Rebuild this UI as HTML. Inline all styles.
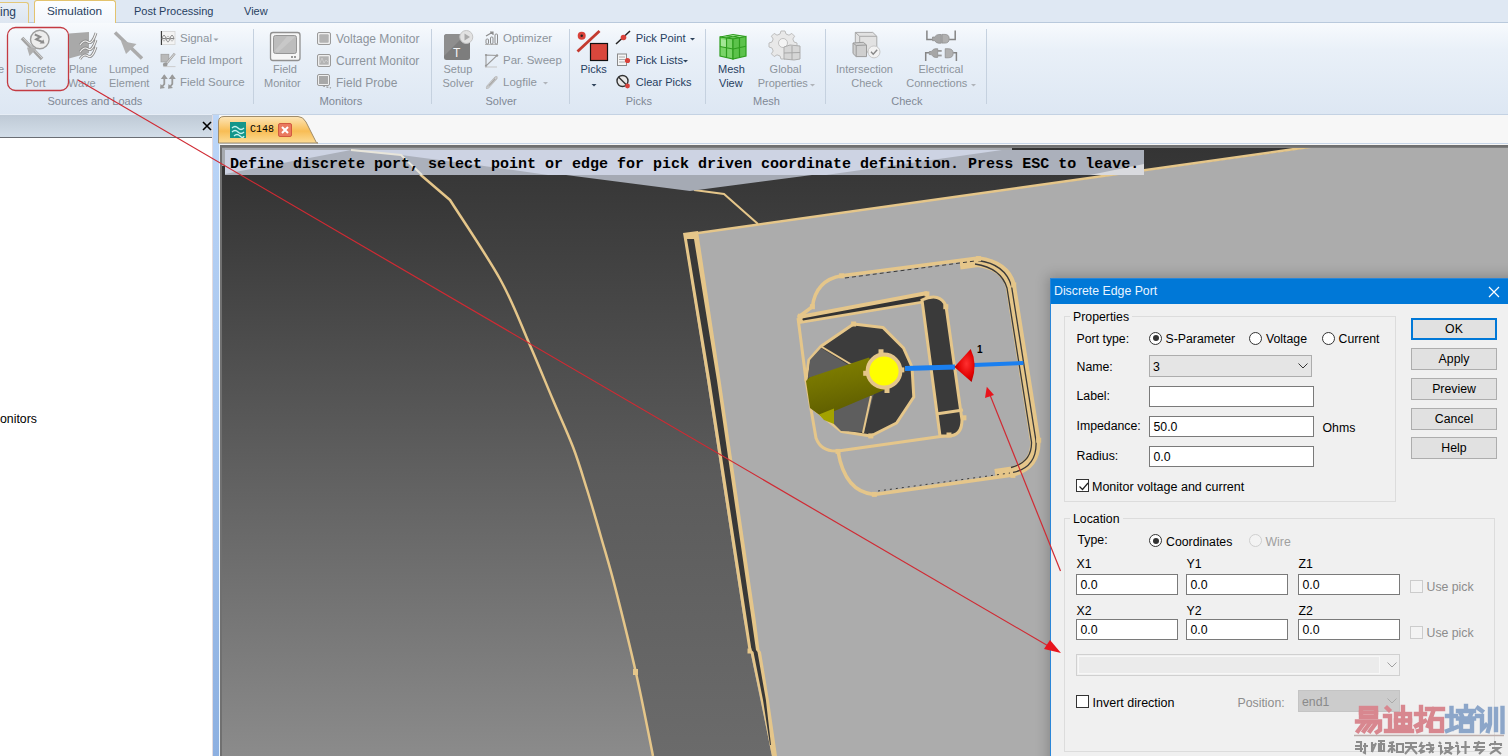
<!DOCTYPE html>
<html><head><meta charset="utf-8">
<style>
*{box-sizing:border-box;margin:0;padding:0}
html,body{width:1508px;height:756px;overflow:hidden;background:#f5f5f5;font-family:"Liberation Sans",sans-serif;font-size:12px;color:#000}
.a{position:absolute}
.t{position:absolute;white-space:pre;line-height:1}
#tabrow{left:0;top:0;width:1508px;height:23px;background:#dfe8f3}
#ribbon{left:0;top:22px;width:1508px;height:93px;background:linear-gradient(#f7fafd 0%,#e9f0f8 30%,#dde7f3 100%);border-top:1px solid #b9c9dc;border-bottom:1px solid #c4d2e3}
.rl{color:#8d949c;font-size:12px}
.gl{color:#7f8894;font-size:12px}
.sep{position:absolute;top:29px;width:1px;height:75px;background:#c5d1df}
#lefthdr{left:0;top:114px;width:212px;height:24px;background:linear-gradient(#e6edf6 0,#e6edf6 1px,#bfcad6 1.5px,#d3dee9 100%);border-bottom:1.6px solid #6a6e74}
#leftpanel{left:0;top:138px;width:213px;height:618px;background:#fff}
#lstripe{left:212px;top:115px;width:8px;height:641px;background:linear-gradient(to right,#e2dbe0 0,#e2dbe0 1px,transparent 1px,transparent 7px,#eaf4fd 7px),linear-gradient(#bcd6f8,#8db0e1)}
#tabstrip{left:220px;top:115px;width:1288px;height:30px;background:#f7f7f7}
#vp{left:220px;top:145px;width:1288px;height:611px;background:#3a3a3a;overflow:hidden;border-top:2px solid #707070;border-left:2px solid #707070}
#dlg{left:1050px;top:278px;width:470px;height:490px;background:#f0f0f0;border:1px solid #2a86d8;box-shadow:0 0 12px 2px rgba(0,0,0,0.22)}
#dtitle{left:0;top:0;width:100%;height:25px;background:#0078d7}
.lbl{font-size:12.3px;color:#000}
.tb{position:absolute;background:#fff;border:1px solid #7a7a7a}
.btn{position:absolute;width:86px;height:22px;background:#e1e1e1;border:1px solid #adadad;text-align:center;font-size:12.3px;line-height:20px}
.rad{position:absolute;width:13px;height:13px;border:1px solid #333;border-radius:50%;background:#fff}
.chk{position:absolute;width:13px;height:13px;border:1px solid #333;background:#fff}
</style></head><body>

<div id="tabrow" class="a"></div>
<div id="ribbon" class="a"></div>
<div id="lefthdr" class="a"></div>
<div id="leftpanel" class="a"></div>
<div id="lstripe" class="a"></div>
<div id="tabstrip" class="a"></div><div class="a" style="left:220px;top:143px;width:1288px;height:1px;background:#c8d6e8"></div>
<!-- TAB ROW -->
<div class="a" style="left:-10px;top:2px;width:39px;height:21px;background:linear-gradient(#e8eef6,#dde6f1);border:1px solid #e3c779;border-bottom:none;border-radius:3px 3px 0 0"></div>
<div class="t" style="left:0;top:6px;font-size:12px;color:#27405f">ing</div>
<div class="a" style="left:34px;top:0;width:82px;height:23px;background:linear-gradient(#fdfeff,#f3f7fc);border:1px solid #e3c36e;border-bottom:none;border-radius:3px 3px 0 0"></div>
<div class="t" style="left:47px;top:6px;font-size:11.8px;color:#27405f">Simulation</div>
<div class="t" style="left:134px;top:6px;font-size:11px;color:#27405f">Post Processing</div>
<div class="t" style="left:244px;top:6px;font-size:11px;color:#27405f">View</div>

<!-- RIBBON CONTENT -->
<div class="t rl" style="left:-2px;top:64px;font-size:11px">e</div>
<div class="t rl" style="left:15.5px;top:64px;font-size:11px">Discrete</div>
<div class="t rl" style="left:25.5px;top:78px;font-size:11px">Port</div>
<div class="t rl" style="left:69px;top:64px;font-size:11px">Plane</div>
<div class="t rl" style="left:68px;top:78px;font-size:11px">Wave</div>
<div class="t rl" style="left:109px;top:64px;font-size:11px">Lumped</div>
<div class="t rl" style="left:109px;top:78px;font-size:11px">Element</div>
<div class="t rl" style="left:180px;top:33px;font-size:11.5px">Signal</div>
<div class="t rl" style="left:180px;top:55px;font-size:11.8px">Field Import</div>
<div class="t rl" style="left:180px;top:77px;font-size:11.5px">Field Source</div>
<div class="t gl" style="left:47.5px;top:96px;font-size:11px">Sources and Loads</div>
<div class="sep" style="left:253px"></div>

<div class="t rl" style="left:273px;top:64px;font-size:11px">Field</div>
<div class="t rl" style="left:264px;top:78px;font-size:11px">Monitor</div>
<div class="t rl" style="left:336px;top:33px;font-size:12px">Voltage Monitor</div>
<div class="t rl" style="left:336px;top:55px;font-size:12px">Current Monitor</div>
<div class="t rl" style="left:336px;top:77px;font-size:12px">Field Probe</div>
<div class="t gl" style="left:319.5px;top:96px;font-size:11.2px">Monitors</div>
<div class="sep" style="left:431px"></div>

<div class="t rl" style="left:443.5px;top:64px;font-size:11px">Setup</div>
<div class="t rl" style="left:442.5px;top:78px;font-size:11px">Solver</div>
<div class="t rl" style="left:503px;top:33px;font-size:11.5px">Optimizer</div>
<div class="t rl" style="left:503px;top:55px;font-size:11.5px">Par. Sweep</div>
<div class="t rl" style="left:503px;top:77px;font-size:11.5px">Logfile</div>
<div class="t gl" style="left:485.5px;top:96px;font-size:11px">Solver</div>
<div class="sep" style="left:569px"></div>

<div class="t" style="left:580.5px;top:64px;font-size:11px;color:#27405f">Picks</div>
<div class="t" style="left:635.8px;top:33px;font-size:11.2px;color:#27405f">Pick Point</div>
<div class="t" style="left:635.8px;top:55px;font-size:11.2px;color:#27405f">Pick Lists</div>
<div class="t" style="left:635.8px;top:77px;font-size:11px;color:#27405f">Clear Picks</div>
<div class="t gl" style="left:625.7px;top:96px;font-size:11px">Picks</div>
<div class="sep" style="left:705px"></div>

<div class="t" style="left:718px;top:64px;font-size:11px;color:#27405f">Mesh</div>
<div class="t" style="left:719px;top:78px;font-size:11px;color:#27405f">View</div>
<div class="t rl" style="left:769.6px;top:64px;font-size:11px">Global</div>
<div class="t rl" style="left:757.7px;top:78px;font-size:11px">Properties</div>
<div class="t gl" style="left:753px;top:96px;font-size:11px">Mesh</div>
<div class="sep" style="left:825px"></div>

<div class="t rl" style="left:836px;top:64px;font-size:11px">Intersection</div>
<div class="t rl" style="left:851.3px;top:78px;font-size:11px">Check</div>
<div class="t rl" style="left:918.5px;top:64px;font-size:11px">Electrical</div>
<div class="t rl" style="left:906.2px;top:78px;font-size:11px">Connections</div>
<div class="t gl" style="left:891.3px;top:96px;font-size:11px">Check</div>
<div class="sep" style="left:986px"></div>

<svg class="a" style="left:0;top:0" width="1000" height="115" viewBox="0 0 1000 115">
<defs>
<linearGradient id="gr1" x1="0" y1="0" x2="1" y2="1"><stop offset="0" stop-color="#d0d0d0"/><stop offset="1" stop-color="#8f8f8f"/></linearGradient>
<linearGradient id="grn" x1="0" y1="0" x2="1" y2="1"><stop offset="0" stop-color="#9be38a"/><stop offset="1" stop-color="#3fb52d"/></linearGradient>
</defs>
<!-- red highlight -->
<rect x="7.5" y="27.5" width="61" height="63" rx="8" fill="none" stroke="#c43a42" stroke-width="1.3"/>
<!-- discrete port icon -->
<line x1="22" y1="38" x2="42" y2="59" stroke="#a3a3a3" stroke-width="3.6"/>
<line x1="22.6" y1="37.6" x2="42.6" y2="58.6" stroke="#d2d2d2" stroke-width="1"/>
<polygon points="27,47.5 29.5,56 37,48" fill="#b0b0b0"/>
<circle cx="39.8" cy="39.5" r="9.3" fill="#ededed" stroke="#9e9e9e" stroke-width="1.4"/>
<path d="M34.8,34.5 L40.2,36.8 L36.2,39.3 L42.5,42" fill="none" stroke="#8c8c8c" stroke-width="2"/>
<polygon points="44.5,43.5 39.5,43.5 43.5,39.5" fill="#8c8c8c"/>
<!-- plane wave -->
<polygon points="69,33.5 89,32 89,53 69,58.5" fill="#a9a9a9"/>
<path d="M80,45 q4,-6 8,-3 t8,-9 M80,52 q4,-6 8,-3 t8,-9 M80,59 q4,-6 8,-3 t8,-9" fill="none" stroke="#8a8a8a" stroke-width="2.8"/><path d="M80,45 q4,-6 8,-3 t8,-9 M80,52 q4,-6 8,-3 t8,-9 M80,59 q4,-6 8,-3 t8,-9" fill="none" stroke="#f4f4f4" stroke-width="1.1"/>
<!-- lumped -->
<line x1="115" y1="32.5" x2="142" y2="58.5" stroke="#ababab" stroke-width="3.5"/>
<polygon points="121,41 126,54 136.5,44" fill="#b0b0b0"/>
<!-- signal icon -->
<rect x="161.8" y="31.4" width="13.2" height="13.2" fill="#f3f3f3" stroke="#d4d4d4" stroke-width="0.8"/>
<line x1="161.4" y1="31" x2="161.4" y2="45" stroke="#333" stroke-width="1.1"/>
<line x1="162" y1="38.6" x2="174" y2="38.6" stroke="#666" stroke-width="0.9"/>
<path d="M162,38.6 q2,-7 4,0 t4,0 t4,0" fill="none" stroke="#8a8a8a" stroke-width="0.9"/>
<path d="M162,38.6 q2,5 4,0 t4,0 t4,0" fill="none" stroke="#b0b0b0" stroke-width="0.8"/>
<path d="M213.5,38.5 l5,0 l-2.5,2.5z" fill="#9aa0a8"/>
<!-- field import -->
<rect x="161" y="54.3" width="7.8" height="7.6" fill="#b9b9b9" stroke="#a0a0a0" stroke-width="0.8"/>
<line x1="165.5" y1="64.5" x2="174.8" y2="53.5" stroke="#a5a5a5" stroke-width="2.4"/>
<line x1="165.5" y1="64.5" x2="174.8" y2="53.5" stroke="#e8e8e8" stroke-width="0.8"/>
<circle cx="165.2" cy="64.8" r="2.3" fill="#9a9a9a"/>
<line x1="163.5" y1="66.6" x2="175.5" y2="66.6" stroke="#c8c8c8" stroke-width="0.9"/>
<!-- field source -->
<path d="M164.3,75.5 V84 L161.5,87.5 M172.3,75.5 V84 L169.5,87.5" fill="none" stroke="#9a9a9a" stroke-width="1.8"/>
<path d="M160.8,79 L164.3,74.2 L167.8,79 Z M168.8,79 L172.3,74.2 L175.8,79 Z M160,88.8 L160.5,84 L165,88 Z M168,88.8 L168.5,84 L173,88 Z" fill="#9a9a9a"/>
<!-- field monitor -->
<rect x="270.5" y="32.5" width="29.5" height="28" rx="2.5" fill="#f6f6f6" stroke="#909090" stroke-width="1.3"/>
<rect x="273.5" y="35.5" width="23" height="18" rx="2" fill="#bdbdbd" stroke="#8f8f8f" stroke-width="0.9"/><polygon points="274.5,51 287,36.5 295.5,36.5 278,52.5" fill="#cacaca" opacity="0.8"/>
<rect x="291" y="56" width="2" height="2" fill="#999"/><rect x="294" y="56" width="2" height="2" fill="#999"/>
<!-- monitors small -->
<rect x="317.5" y="32.5" width="13" height="12" rx="1.5" fill="#eee" stroke="#9a9a9a"/><rect x="319.3" y="34.3" width="9.4" height="8.4" rx="1" fill="#b3b3b3"/>
<rect x="317.5" y="54.5" width="13" height="12" rx="1.5" fill="#eee" stroke="#9a9a9a"/><rect x="319.3" y="56.3" width="9.4" height="8.4" fill="#b3b3b3"/><path d="M320,63 l2,-5 l2,5 l2,-3 l2,2" fill="none" stroke="#cfcfcf" stroke-width="0.8"/>
<rect x="317.5" y="74.5" width="12" height="11" rx="1.5" fill="#eee" stroke="#9a9a9a"/><rect x="319" y="76" width="9" height="8" fill="#a8a8a8"/>
<line x1="323" y1="86" x2="331" y2="88" stroke="#999" stroke-width="1.2" stroke-dasharray="2,1.5"/>
<!-- setup solver -->
<rect x="444" y="34" width="26" height="26" rx="2.5" fill="#7d7d7d"/>
<polygon points="444,56 444,36.5 446.5,34 466,34" fill="#8e8e8e"/>
<text x="453" y="57" font-family="Liberation Sans" font-size="12" fill="#f4f4f4">T</text>
<circle cx="466.3" cy="37" r="6.5" fill="#e2e2e2" stroke="#c5c5c5"/>
<polygon points="464.5,33.5 464.5,40.5 470,37" fill="#aaa"/>
<!-- optimizer -->
<path d="M485,44.5 l13,0" stroke="#bbb"/>
<rect x="486" y="39" width="2.5" height="5" rx="1" fill="none" stroke="#8d8d8d"/>
<rect x="490.5" y="37" width="2.5" height="7" rx="1" fill="none" stroke="#8d8d8d"/>
<rect x="495" y="34" width="2.5" height="10" rx="1" fill="none" stroke="#8d8d8d"/>
<path d="M486,36 l7,-4 m-3,0 l3,0 l0,3" fill="none" stroke="#8d8d8d" stroke-width="1.2"/>
<!-- par sweep -->
<path d="M486,66 V55 L497,55.5 Z" fill="none" stroke="#9a9a9a" stroke-width="1.1"/><circle cx="486" cy="66" r="1.2" fill="#999"/><circle cx="486" cy="55" r="1.1" fill="#999"/><circle cx="497" cy="55.5" r="1.2" fill="#999"/>
<line x1="485" y1="67" x2="497" y2="67" stroke="#c5c5c5"/>
<!-- logfile clip -->
<path d="M486.5,87 L495,77.5 Q497.5,75.5 496.8,78.5 L488.5,87.5 Q486.5,89.5 486.5,87 M489,85 L495,78.5" fill="none" stroke="#a8a8a8" stroke-width="1.3"/><path d="M486.5,87 L495,77.5 Q497.5,75.5 496.8,78.5 L488.5,87.5 Q486.5,89.5 486.5,87" fill="none" stroke="#e8e8e8" stroke-width="0.5"/>
<path d="M543,82 l5,0 l-2.5,2.5z" fill="#b0b4ba"/>
<!-- picks -->
<circle cx="581.7" cy="35.7" r="4" fill="#d9423a"/><circle cx="581.7" cy="35.7" r="1.2" fill="#222"/>
<line x1="577.5" y1="51.5" x2="599.5" y2="31" stroke="#c33a2f" stroke-width="2.8"/>
<rect x="590.5" y="43.5" width="17" height="17" fill="#d9473c" stroke="#111" stroke-width="1.2"/>
<path d="M591.5,84 l5,0 l-2.5,2.5z" fill="#30445c"/>
<!-- pick point -->
<line x1="616" y1="44" x2="630" y2="31" stroke="#222" stroke-width="1.5"/>
<circle cx="623.5" cy="37.5" r="2.8" fill="#d9423a"/>
<path d="M690,38 l5,0 l-2.5,2.5z" fill="#30445c"/>
<!-- pick lists -->
<rect x="617.5" y="54" width="9" height="11.5" fill="#f5f5f5" stroke="#8a8a8a"/>
<path d="M619,57 h6 M619,59.5 h6 M619,62 h6" stroke="#999" stroke-width="0.8"/>
<circle cx="627.5" cy="60.5" r="2.6" fill="#d9423a"/>
<path d="M683,60 l5,0 l-2.5,2.5z" fill="#30445c"/>
<!-- clear picks -->
<circle cx="622.5" cy="81" r="5.5" fill="#e8e8e8" stroke="#333" stroke-width="1.4"/>
<line x1="618.5" y1="77" x2="626.5" y2="85" stroke="#333" stroke-width="1.4"/>
<circle cx="627.5" cy="86" r="2.4" fill="#d9423a"/>
<!-- mesh view cube -->
<polygon points="720,37 733,34.5 746,36.5 733,39" fill="#a5e69a" stroke="#2e9d1e" stroke-width="1"/>
<polygon points="720,37 733,39 733,59 720,56" fill="#79d468" stroke="#2e9d1e" stroke-width="1.2"/>
<polygon points="733,39 746,36.5 746,56 733,59" fill="#5cc24b" stroke="#2e9d1e" stroke-width="1.2"/>
<path d="M726.5,38 V57.5 M720,46.5 L733,49 M739.5,37.75 V57.5 M733,49 L746,46.25 M726.5,35.75 L739.5,37.75 M739.5,35.5 L726.5,38" stroke="#2e9d1e" stroke-width="1.2" fill="none"/>
<polygon points="721,39 726,40 726,47 721,46" fill="#b5eeaa" opacity="0.7"/>
<!-- global properties gear -->
<g transform="translate(783,43)">
<path d="M-2,-12 h4 l1,3 l3,1.2 l2.8,-1.8 l2.8,2.8 l-1.8,2.8 l1.2,3 l3,1 v4 l-3,1 l-1.2,3 l1.8,2.8 l-2.8,2.8 l-2.8,-1.8 l-3,1.2 l-1,3 h-4 l-1,-3 l-3,-1.2 l-2.8,1.8 l-2.8,-2.8 l1.8,-2.8 l-1.2,-3 l-3,-1 v-4 l3,-1 l1.2,-3 l-1.8,-2.8 l2.8,-2.8 l2.8,1.8 l3,-1.2 z" fill="#e8e8e8" stroke="#bdbdbd" stroke-width="1"/>
<circle cx="0" cy="0" r="4.5" fill="#f4f4f4" stroke="#c0c0c0"/>
</g>
<polygon points="784,47 790,45 800,46 800,59 794,60 784,59" fill="#d6d6d6" stroke="#adadad"/>
<path d="M792,46 V60 M784,53 L800,52.5" stroke="#a8a8a8"/>
<path d="M810,84 l5,0 l-2.5,2.5z" fill="#b0b4ba"/>
<!-- intersection check -->
<polygon points="855.3,32.4 872.8,32.4 876.8,36.3 876.8,52 859.7,52 855.3,48" fill="#e2e2e2" stroke="#a9a9a9" stroke-width="1"/>
<path d="M855.3,32.4 L859.7,36.3 L876.8,36.3 M859.7,36.3 V52" fill="none" stroke="#a9a9a9" stroke-width="1"/>
<polygon points="853,43 863.3,42.3 866.5,45 866.5,56.6 856.2,56.6 853,53.5" fill="#cfcfcf" stroke="#9c9c9c" stroke-width="1"/>
<path d="M853,43 L856.2,45.5 L866.5,45 M856.2,45.5 V56.6" fill="none" stroke="#9c9c9c" stroke-width="1"/>
<circle cx="874" cy="51.9" r="6" fill="#f2f2f2" stroke="#c8c8c8"/>
<path d="M871,51.8 l2.2,2.4 l4,-4.5" fill="none" stroke="#888" stroke-width="1.4"/>
<!-- electrical connections -->
<path d="M926.9,30.4 V39.5 H932.5 M955.2,30.4 V39.5 H949.2 M925.7,61 V52.7 H929.3 M956.4,61 V52.7 H953.2" fill="none" stroke="#858585" stroke-width="1.5"/>
<path d="M932.5,37 h2 q2,-2.5 4,-2.5 h2.8 v8.7 h-2.8 q-2,0 -4,-2.5 h-2z" fill="#a6a6a6" stroke="#8a8a8a" stroke-width="0.7"/>
<path d="M942,34.4 h3 q4.2,0 4.2,4.35 q0,4.35 -4.2,4.35 h-3z" fill="#b0b0b0" stroke="#8a8a8a" stroke-width="0.7"/>
<path d="M929.3,51.5 h2 q2,-2.8 4,-2.8 h2.4 v8.7 h-2.4 q-2,0 -4,-2.8 h-2z" fill="#a6a6a6" stroke="#8a8a8a" stroke-width="0.7"/>
<rect x="937.7" y="50" width="4" height="1.8" fill="#999"/><rect x="937.7" y="54.6" width="4" height="1.8" fill="#999"/>
<path d="M945.2,48.7 h3 q5,0 5,4.55 q0,4.55 -5,4.55 h-3z" fill="#b0b0b0" stroke="#8a8a8a" stroke-width="0.7"/>
<path d="M971,84 l5,0 l-2.5,2.5z" fill="#b0b4ba"/>
</svg>

<!-- LEFT HEADER X -->
<svg class="a" style="left:201.5px;top:120.5px" width="10" height="10"><path d="M1,1 L9,9 M9,1 L1,9" stroke="#000" stroke-width="1.6"/></svg>
<div class="t" style="left:0;top:413px;font-size:12.3px;color:#000">onitors</div>


<svg class="a" style="left:214px;top:114px" width="120" height="34">
<defs><linearGradient id="tabg" x1="0" y1="0" x2="0" y2="1"><stop offset="0" stop-color="#fde6b8"/><stop offset="0.55" stop-color="#f8bd55"/><stop offset="1" stop-color="#fcdc96"/></linearGradient></defs>
<path d="M4.5,29 L4.5,8 Q4.5,2.5 10,2.5 L84,2.5 Q89,2.5 92,8 L102.4,28.6 L104,29 Z" fill="url(#tabg)" stroke="#a08c6a" stroke-width="1"/>
<rect x="16" y="8" width="16" height="16" fill="#14968a"/>
<path d="M18,14 q3,-3 6,0 t6,0 M18,18 q3,-3 6,0 t6,0 M20,22 q3,-3 6,0 t4,0" fill="none" stroke="#c8f2ee" stroke-width="1.3"/>
<rect x="64.5" y="9.5" width="13" height="13" rx="1.5" fill="#ea7a5f" stroke="#d25a40"/>
<path d="M68,13 L74,19 M74,13 L68,19" stroke="#fff" stroke-width="2"/>
</svg>
<div class="t" style="left:250px;top:124px;font-family:'Liberation Mono',monospace;font-size:10px;transform:scaleY(1.15);transform-origin:0 0;color:#000">C148</div>
<div id="vp" class="a"></div>
<svg class="a" style="left:0;top:0" width="1508" height="756" viewBox="0 0 1508 756">
<defs>
<clipPath id="vpc"><rect x="222" y="147" width="1286" height="609"/></clipPath>
<linearGradient id="bgg" x1="0" y1="147" x2="0" y2="756" gradientUnits="userSpaceOnUse"><stop offset="0" stop-color="#2f2f2f"/><stop offset="1" stop-color="#8b8b8b"/></linearGradient>
<linearGradient id="faceg" x1="0" y1="147" x2="0" y2="756" gradientUnits="userSpaceOnUse"><stop offset="0" stop-color="#343434"/><stop offset="0.25" stop-color="#464646"/><stop offset="0.54" stop-color="#5b5b5b"/><stop offset="1" stop-color="#6b6b6b"/></linearGradient>
<linearGradient id="cyl" x1="0" y1="0" x2="0.3" y2="1"><stop offset="0" stop-color="#858400"/><stop offset="0.5" stop-color="#737200"/><stop offset="1" stop-color="#5e5d00"/></linearGradient>
<radialGradient id="cone" cx="0.6" cy="0.45" r="0.7"><stop offset="0" stop-color="#ff3030"/><stop offset="0.6" stop-color="#e00000"/><stop offset="1" stop-color="#900000"/></radialGradient>
</defs>
<g clip-path="url(#vpc)">
<rect x="222" y="147" width="1286" height="609" fill="url(#bgg)"/>
<path fill="url(#faceg)" d="M351,149 L401,155 L422,176 L450,200 C458.3,213.2 486.8,255.2 500,279 C513.2,302.8 520.2,322.8 529,343 C537.8,363.2 545.7,382.7 553,400 C560.3,417.3 567.3,432.1 573,447 C578.7,461.9 582.3,474.5 587,489.5 C591.7,504.5 596.3,520.5 601,537 C605.7,553.5 609.6,565.7 615.4,588.4 C621.2,611.1 629.7,645.1 636,673 C642.3,700.9 650.2,742.2 653,756 L1508,756 L1508,147 L351,147 Z"/>
<rect x="222" y="147" width="790" height="3" fill="#8e9096"/>
<!-- plane -->
<polygon fill="#acacac" points="684,235 1508,120 1508,756 772,756 743.8,620 707,380"/>
<!-- left edge band -->
<polygon fill="#e5c68a" points="683,233 707,380 743.8,620 748.5,650 750.5,652 760.7,700 771.9,756 777,756 768.9,700 761,652 759.5,650 755.7,620 720.5,380 698,231"/>
<polygon fill="#383838" points="687,239 710.3,380 747,620 751.5,650 753.5,652 763,700 770,745 771,745 765.9,700 757.5,652 756,650 751.7,620 716.9,380 694,239"/>
<polyline fill="none" stroke="#e5c68a" stroke-width="2.6" points="684,235 1508,119"/>
<polyline fill="none" stroke="#e5c68a" stroke-width="2" points="694,190 724,194 758,224"/>
<path fill="none" stroke="#e5c68a" stroke-width="2.5" stroke-linejoin="round" d="M351,149 L401,155 L422,176 L450,200 C458.3,213.2 486.8,255.2 500,279 C513.2,302.8 520.2,322.8 529,343 C537.8,363.2 545.7,382.7 553,400 C560.3,417.3 567.3,432.1 573,447 C578.7,461.9 582.3,474.5 587,489.5 C591.7,504.5 596.3,520.5 601,537 C605.7,553.5 609.6,565.7 615.4,588.4 C621.2,611.1 629.7,645.1 636,673 C642.3,700.9 650.2,742.2 653,756"/>
<rect x="633" y="669" width="5" height="6" fill="#e5c68a"/>
<!-- port feature -->
<g fill="none" stroke="#e5c68a" stroke-width="3.5" stroke-linejoin="round">
<path d="M800,316 L812.4,306.7 Q816,280 841.6,275.8 L978.5,258 Q1008,262 1014,284 L1038.7,440 Q1040,468 1013,475 L874,494.4 Q845,492 838,451.4"/>
<path d="M960,265 L978,262.5 Q1004,266 1010,286 L1034.5,441 Q1036,465 1012,471 L995,473.5" stroke="#e5c68a" stroke-width="9"/>
</g>
<path d="M975,264 Q1001,268 1007,288 L1031.5,442 Q1032,462 1011,467.5" fill="none" stroke="#3a3a3a" stroke-width="1.3"/>
<path d="M978,260.5 Q1005,264 1011.5,286 L1036,441 Q1037.5,467 1013,472.5" fill="none" stroke="#3a3a3a" stroke-width="1.3"/>
<path d="M845,278 L975,261" fill="none" stroke="#3a3a3a" stroke-width="1" stroke-dasharray="4,3"/>
<path d="M878,491 L1010,473" fill="none" stroke="#3a3a3a" stroke-width="1" stroke-dasharray="2,4"/>
<!-- B frame -->
<polygon fill="#e5c68a" points="797,315.5 927,291 931,302 799,324"/>
<polygon fill="#333" points="802,318.5 925,295.5 927,300 803,320.5"/>
<path d="M798,318 L806,380 L816,438 Q821,452 838,451 L951,435" fill="none" stroke="#e5c68a" stroke-width="3"/>
<!-- slot -->
<path d="M922,300 Q940,292 946,306 L962,420 Q962,436 948,436 L940,436 Z" fill="#3a3a3a" stroke="#e5c68a" stroke-width="3"/>
<line x1="936" y1="414" x2="963" y2="410" stroke="#e5c68a" stroke-width="3"/>
<!-- octagon hole -->
<polygon fill="#3c3c3c" stroke="#e5c68a" stroke-width="3" stroke-linejoin="round" points="853.6,324 882.9,327.4 903.5,348 912,367 913.8,397 896.6,423 870.8,436 841.6,431.6 815,410 806,380 808.9,360 821,346.3"/>
<polygon fill="#5e5e5e" points="821,348 810,360 808,378 850,366"/>
<polygon fill="#5e5e5e" points="834,408.5 874,393 864,432 841,431 834,424"/>
<line x1="822" y1="347" x2="852" y2="365" stroke="#e5c68a" stroke-width="2"/>
<line x1="871" y1="396" x2="863" y2="433" stroke="#e5c68a" stroke-width="2"/>
<polygon fill="url(#cyl)" points="869,357.5 809.8,377.3 806,381 810,408 821.5,416.5 886.5,389"/>
<polygon fill="#a3a200" points="819,414.5 834,408.5 834,424 824,420"/>
<circle cx="884" cy="371" r="16.5" fill="#ffff00" stroke="#e5c68a" stroke-width="3.8"/><rect x="863.2" y="370.8" width="5" height="5" fill="#e5c68a"/><rect x="899.3" y="367.4" width="5" height="5" fill="#e5c68a"/>
<rect x="839.1" y="273.3" width="5" height="5" fill="#e5c68a"/><rect x="809.9" y="304.2" width="5" height="5" fill="#e5c68a"/><rect x="797.8" y="313.7" width="5" height="5" fill="#e5c68a"/><rect x="851.1" y="321.5" width="5" height="5" fill="#e5c68a"/><rect x="878.5" y="349.3" width="5" height="5" fill="#e5c68a"/><rect x="976.0" y="256.1" width="5" height="5" fill="#e5c68a"/><rect x="1011.2" y="282.5" width="5" height="5" fill="#e5c68a"/><rect x="924.4" y="291.4" width="5" height="5" fill="#e5c68a"/><rect x="943.3" y="304.2" width="5" height="5" fill="#e5c68a"/><rect x="1036.2" y="437.7" width="5" height="5" fill="#e5c68a"/><rect x="1010.4" y="472.9" width="5" height="5" fill="#e5c68a"/><rect x="961.4" y="415.3" width="5" height="5" fill="#e5c68a"/><rect x="946.5" y="432.5" width="5" height="5" fill="#e5c68a"/><rect x="835.5" y="448.9" width="5" height="5" fill="#e5c68a"/><rect x="871.8" y="491.9" width="5" height="5" fill="#e5c68a"/><rect x="868.3" y="433.4" width="5" height="5" fill="#e5c68a"/><rect x="884.5" y="388" width="5" height="5" fill="#e5c68a"/><rect x="747.5" y="648.5" width="4" height="5" fill="#e5c68a"/>
<!-- blue line & cone -->
<polyline fill="none" stroke="#1a7ff0" stroke-width="5" points="905,368.6 955,367"/>
<polyline fill="none" stroke="#1a7ff0" stroke-width="4" points="974,365 1023.5,363"/>
<path d="M954.4,367 L970.7,348.9 Q978,364 971.6,382 Z" fill="url(#cone)"/>
<text x="977" y="353" font-family="Liberation Sans" font-weight="bold" font-size="10" fill="#000">1</text>
</g>
</svg>



<svg class="a" style="left:0;top:0" width="1508" height="756" viewBox="0 0 1508 756">
<rect x="222" y="147" width="1286" height="1" fill="#7d7d7d"/>
<rect x="222" y="148" width="790" height="2" fill="#a6a9ae"/><rect x="222" y="148" width="3" height="18" fill="#a6a9ae"/>
<rect x="225" y="150" width="919" height="25" fill="#cdd3e3"/>
<polygon fill="#abb0bb" points="225,174 351,150 401,155 470,164 548,175 225,175"/>
<polygon fill="#abb0bb" points="826,175 1002,150 1144,150 1144,175"/>
<polygon fill="#d9dade" points="1090,175 1144,164 1144,175"/>
<polyline fill="none" stroke="#e8e5da" stroke-width="2" points="351,150 401,155 422,175"/>
<polygon fill="#a5aab4" points="566,175 690,191 812,175"/>
</svg>
<div class="t" style="left:230px;top:157px;font-family:'Liberation Mono',monospace;font-weight:bold;font-size:15px;color:#000">Define discrete port, select point or edge for pick driven coordinate definition. Press ESC to leave.</div>
<div id="dlg" class="a">
<div id="dtitle" class="a"></div>
<div class="t" style="left:3px;top:6px;font-size:12.3px;color:#e8f4ff">Discrete Edge Port</div>
<svg class="a" style="left:436.5px;top:6.5px" width="12" height="12"><path d="M1,1 L11,11 M11,1 L1,11" stroke="#fff" stroke-width="1.2"/></svg>
<!-- Properties group -->
<div class="a" style="left:13px;top:37px;width:332px;height:186px;border:1px solid #dcdcdc"></div>
<div class="t lbl" style="left:19px;top:32px;background:#f0f0f0;padding:0 3px">Properties</div>
<div class="t lbl" style="left:25.5px;top:54px">Port type:</div>
<div class="rad" style="left:98px;top:52.5px"><div class="a" style="left:2.5px;top:2.5px;width:6px;height:6px;border-radius:50%;background:#333"></div></div>
<div class="t lbl" style="left:114.5px;top:54px">S-Parameter</div>
<div class="rad" style="left:198px;top:52.5px"></div>
<div class="t lbl" style="left:215px;top:54px">Voltage</div>
<div class="rad" style="left:271px;top:52.5px"></div>
<div class="t lbl" style="left:287.5px;top:54px">Current</div>
<div class="t lbl" style="left:25.5px;top:82px">Name:</div>
<div class="a" style="left:98px;top:76px;width:163px;height:22px;background:#e5e5e5;border:1px solid #adadad"></div>
<div class="t lbl" style="left:102px;top:82px">3</div>
<svg class="a" style="left:247px;top:84px" width="10" height="6"><path d="M0.5,0.5 L5,5 L9.5,0.5" fill="none" stroke="#333" stroke-width="1"/></svg>
<div class="t lbl" style="left:25.5px;top:111px">Label:</div>
<div class="tb" style="left:98px;top:107px;width:165px;height:21px"></div>
<div class="t lbl" style="left:25.5px;top:141px">Impedance:</div>
<div class="tb" style="left:98px;top:137px;width:165px;height:21px"></div>
<div class="t lbl" style="left:102.5px;top:142px">50.0</div>
<div class="t lbl" style="left:271.5px;top:143px">Ohms</div>
<div class="t lbl" style="left:25.5px;top:171px">Radius:</div>
<div class="tb" style="left:98px;top:167px;width:165px;height:21px"></div>
<div class="t lbl" style="left:102.5px;top:172px">0.0</div>
<div class="chk" style="left:25px;top:200px"><svg class="a" style="left:1px;top:1px" width="11" height="11"><path d="M1.5,5.5 L4.5,8.5 L10,2" fill="none" stroke="#222" stroke-width="1.2"/></svg></div>
<div class="t" style="left:41px;top:202px;font-size:12.5px">Monitor voltage and current</div>
<!-- buttons -->
<div class="btn" style="left:360px;top:39px;height:22px;border:2px solid #0078d7;line-height:18px">OK</div>
<div class="btn" style="left:360px;top:69px">Apply</div>
<div class="btn" style="left:360px;top:99px">Preview</div>
<div class="btn" style="left:360px;top:129px">Cancel</div>
<div class="btn" style="left:360px;top:158px">Help</div>
<!-- Location group -->
<div class="a" style="left:13px;top:239px;width:431px;height:234px;border:1px solid #dcdcdc"></div>
<div class="t lbl" style="left:19px;top:234px;background:#f0f0f0;padding:0 3px">Location</div>
<div class="t lbl" style="left:26.5px;top:255px">Type:</div>
<div class="rad" style="left:98px;top:255px"><div class="a" style="left:2.5px;top:2.5px;width:6px;height:6px;border-radius:50%;background:#333"></div></div>
<div class="t lbl" style="left:115px;top:257px">Coordinates</div>
<div class="rad" style="left:197.5px;top:255px;border-color:#cfcfcf;background:#f3f3f3"></div>
<div class="t lbl" style="left:214.5px;top:257px;color:#a0a0a0">Wire</div>
<div class="t lbl" style="left:25.5px;top:279px">X1</div>
<div class="t lbl" style="left:135.5px;top:279px">Y1</div>
<div class="t lbl" style="left:247.5px;top:279px">Z1</div>
<div class="tb" style="left:25px;top:295px;width:102px;height:21px"></div>
<div class="tb" style="left:135px;top:295px;width:102px;height:21px"></div>
<div class="tb" style="left:247px;top:295px;width:102px;height:21px"></div>
<div class="t lbl" style="left:29.5px;top:300px">0.0</div>
<div class="t lbl" style="left:139.5px;top:300px">0.0</div>
<div class="t lbl" style="left:251.5px;top:300px">0.0</div>
<div class="chk" style="left:359px;top:301px;border-color:#cccccc;background:#f3f3f3"></div>
<div class="t lbl" style="left:375.5px;top:302px;color:#8c8c8c">Use pick</div>
<div class="t lbl" style="left:25.5px;top:326px">X2</div>
<div class="t lbl" style="left:135.5px;top:326px">Y2</div>
<div class="t lbl" style="left:247.5px;top:326px">Z2</div>
<div class="tb" style="left:25px;top:340px;width:102px;height:21px"></div>
<div class="tb" style="left:135px;top:340px;width:102px;height:21px"></div>
<div class="tb" style="left:247px;top:340px;width:102px;height:21px"></div>
<div class="t lbl" style="left:29.5px;top:345px">0.0</div>
<div class="t lbl" style="left:139.5px;top:345px">0.0</div>
<div class="t lbl" style="left:251.5px;top:345px">0.0</div>
<div class="chk" style="left:359px;top:347px;border-color:#cccccc;background:#f3f3f3"></div>
<div class="t lbl" style="left:375.5px;top:348px;color:#8c8c8c">Use pick</div>
<div class="a" style="left:25px;top:375px;width:324px;height:22px;background:#f0f0f0;border:1px solid #d0d0d0"><div class="a" style="left:1px;top:1px;width:302px;height:18px;background:#ebebeb;border:1px solid #f7f7f7"></div></div>
<svg class="a" style="left:336px;top:383px" width="10" height="6"><path d="M0.5,0.5 L5,5 L9.5,0.5" fill="none" stroke="#a0a0a0" stroke-width="1"/></svg>
<div class="chk" style="left:25px;top:416px"></div>
<div class="t" style="left:41.5px;top:418px;font-size:12.5px">Invert direction</div>
<div class="t lbl" style="left:186.5px;top:418px;color:#8d8d8d">Position:</div>
<div class="a" style="left:247px;top:411px;width:102px;height:22px;background:#cccccc;border:1px solid #c4c4c4"></div>
<div class="t lbl" style="left:251px;top:417px;color:#8a8a8a">end1</div>
<svg class="a" style="left:336px;top:419px" width="10" height="6"><path d="M0.5,0.5 L5,5 L9.5,0.5" fill="none" stroke="#aaa" stroke-width="1"/></svg>
</div>



<svg class="a" style="left:0;top:0" width="1508" height="756" viewBox="0 0 1508 756">
<line x1="78" y1="80" x2="1050" y2="647" stroke="#d02a33" stroke-width="1.2"/>
<polygon points="1061,653 1044,649 1050,640" fill="#e8141c"/>
<line x1="1060.5" y1="571" x2="990" y2="395" stroke="#d02a33" stroke-width="1.2"/>
<polygon points="986.8,386.8 985,398 994,395" fill="#e8141c"/>
</svg>

<svg class="a" style="left:1350px;top:700px" width="158" height="56" viewBox="0 0 158 56">
<g fill="none" stroke="#d8878f" stroke-width="4.4" stroke-linecap="square">
<!-- 易 x0 -->
<g transform="translate(5,6)">
<rect x="6" y="2" width="15" height="9"/><path d="M6,6.5 H21"/>
<path d="M2,15.5 H25 V24 L22,26"/><path d="M9,17 L3,25 M15,17 L9,25 M21,17 L15,25"/>
</g>
<!-- 迪 -->
<g transform="translate(35,6)">
<path d="M2,2 L4,4 M0,10 H5 V21 M1,25 H27"/>
<rect x="11" y="8" width="14" height="13"/><path d="M18,1 V21 M11,14.5 H25"/>
</g>
<!-- 拓 -->
<g transform="translate(66,6)">
<path d="M0,8 H9 M5,1 V24 L2,25 M0,20 L9,15"/>
<path d="M11,3 H27 M18,3 L12,20"/><rect x="15" y="13" width="11" height="12"/>
</g>
</g>
<g fill="none" stroke="#8ca6c9" stroke-width="4.4" stroke-linecap="square">
<!-- 培 -->
<g transform="translate(97,6)">
<path d="M0,10 H9 M4.5,2 V23 M0,25 L10,21"/>
<path d="M19,0 V3 M11,5 H27 M14,8 L15,10 M24,8 L23,10 M11,12.5 H27"/><rect x="14" y="16" width="11" height="9"/>
</g>
<!-- 训 -->
<g transform="translate(127,6)">
<path d="M1,2 L5,5 M0,10 H5 V23 L9,19"/>
<path d="M13,3 V18 L11,25 M19,3 V24 M25.5,2 V26"/>
</g>
</g>
<line x1="4" y1="35.5" x2="154" y2="35.5" stroke="#bcaeac" stroke-width="1.5"/>
<g fill="none" stroke="#8c8c8c" stroke-width="2.1" transform="translate(4,40)">
<path d="M2,2 h5 v10 M1,6 h7 M1,9 h8 M11,3 v10 l-2,-1 M9,6 h5"/>
<path d="M18,2 v10 M17,5 h5 M22,3 l-4,9 M24,1 h7 M27,1 v11 M25,4 h5 v7 h-5z"/>
<path d="M35,3 l5,-1 M34,6 h7 M38,2 v11 M37,8 l-3,4 M39,8 l2,3 M43,4 h6 v8 h-6z"/>
<path d="M51,3 h12 M51,7 h12 M57,2 v5 l-6,7 M57,7 l6,7"/>
<path d="M68,2 l-2,4 h4 l-4,5 h4 M66,13 l5,-2 M72,5 h8 M72,9 h8 M75,2 l4,11 M80,7 l-5,6"/>
<path d="M85,2 l2,2 M84,6 h3 v7 l2,-2 M91,3 h5 v4 h3 M90,8 h8 l-8,6 M91,10 l7,4"/>
<path d="M102,2 l2,2 M101,6 h3 v7 l2,-2 M107,7 h9 M111.5,1 v13"/>
<path d="M120,3 h11 M119,7 h12 M125,1 l-3,9 h7 l-4,4"/>
<path d="M141,1 v2 M136,4 h11 v2 M136,4 v2 M138,8 h7 l-8,5 M141,9 l6,5 M140,11 l-4,3"/>
</g>
</svg>
</body></html>
